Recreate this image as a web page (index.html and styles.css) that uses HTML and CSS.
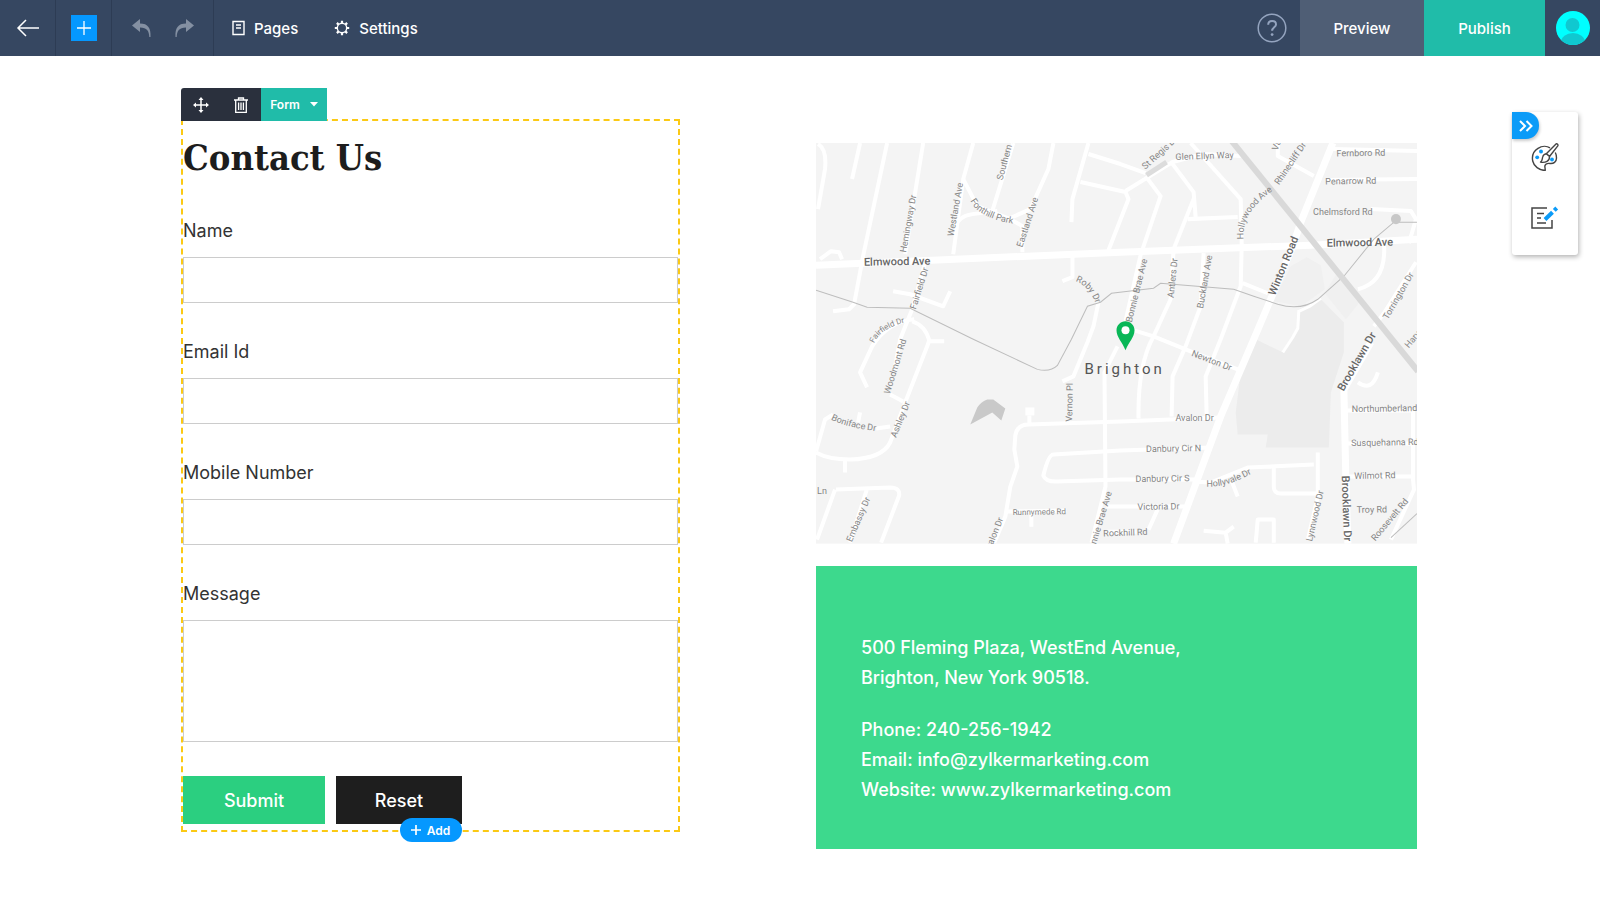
FILE: index.html
```html
<!DOCTYPE html>
<html lang="en">
<head>
    <meta charset="UTF-8">
    <meta name="viewport" content="width=device-width, initial-scale=1.0">
    <title>Site Builder - Contact Us</title>
    <link rel="stylesheet" href="styles.css">
</head>
<body>
    <header class="topbar">
        <button class="bar-cell back-btn" aria-label="Back">
            <svg width="24" height="20" viewBox="0 0 24 20" fill="none" stroke="currentColor" stroke-width="1.5"><path d="M10 2 2 10l8 8M2 10h21"/></svg>
        </button>
        <button class="bar-cell add-btn" aria-label="Add element">
            <span class="add-box">
                <svg width="26" height="26" viewBox="0 0 26 26" stroke="currentColor" stroke-width="1.3"><path d="M13 6v14M6 13h14"/></svg>
            </span>
        </button>
        <div class="bar-cell history">
            <button aria-label="Undo">
                <svg width="20" height="20" viewBox="0 0 20 20" fill="currentColor"><path d="M8 1v4.500c8 0 11 4.500 10.500 13.500h-1.200C17 13 15 9.600 8 9.600V14L0 7.500z"/></svg>
            </button>
            <button aria-label="Redo">
                <svg width="20" height="20" viewBox="0 0 20 20" fill="currentColor"><path d="M12 1v4.500C4 5.500 1 10 1.500 19h1.200C3 13 5 9.600 12 9.600V14l8-6.500z"/></svg>
            </button>
        </div>
        <nav class="bar-menu">
            <a href="#pages">
                <svg width="13" height="16" viewBox="0 0 13 16" fill="none" stroke="currentColor" stroke-width="1.4"><path d="M1 1.500h11v13H1z"/><path d="M4 5h5M4 8h5"/></svg>
                Pages
            </a>
            <a href="#settings">
                <svg width="16" height="16" viewBox="0 0 16 16" fill="none" stroke="currentColor" stroke-width="1.4"><circle cx="8" cy="8" r="4.7"/><path stroke-width="2.2" d="M8 .8v2.400M8 12.800v2.400M.8 8h2.400M12.800 8h2.400M2.900 2.900l1.700 1.700M11.400 11.400l1.700 1.700M2.900 13.100l1.700-1.700M11.400 4.600l1.700-1.700"/></svg>
                Settings
            </a>
        </nav>
        <div class="bar-right">
            <button class="help-btn" aria-label="Help">
                <svg width="30" height="30" viewBox="0 0 30 30" fill="none" stroke="currentColor" stroke-width="1.5"><circle cx="15" cy="15" r="13.8"/><path stroke-width="2" d="M11.200 11.800c0-2.400 1.600-3.800 3.900-3.800s3.900 1.400 3.900 3.400c0 2.900-3.900 2.900-3.900 6.400"/><circle cx="15.1" cy="21.6" r="1.4" fill="currentColor" stroke="none"/></svg>
            </button>
            <button class="preview-btn">Preview</button>
            <button class="publish-btn">Publish</button>
            <button class="avatar-btn" aria-label="Account">
                <svg width="34" height="34" viewBox="0 0 34 34"><defs><clipPath id="avatarClip"><circle cx="17" cy="17" r="17"/></clipPath></defs><g clip-path="url(#avatarClip)"><path fill="#00ffff" d="M0 0h34v34H0z"/><circle cx="16.5" cy="14" r="7" fill="#10c8d0"/><ellipse cx="17" cy="31" rx="12" ry="9" fill="#10c8d0"/></g></svg>
            </button>
        </div>
    </header>

    <main class="canvas">
        <form class="contact-form" onsubmit="return false">
            <div class="element-tools">
                <button type="button" class="tool" aria-label="Move">
                    <svg width="16" height="16" viewBox="0 0 16 16" stroke="currentColor" stroke-width="1.5" fill="currentColor"><path d="M8 2v12M2 8h12"/><path stroke="none" d="M8 0l2.500 3h-5zM8 16l2.500-3h-5zM0 8l3-2.500v5zM16 8l-3-2.500v5z"/></svg>
                </button>
                <button type="button" class="tool" aria-label="Delete">
                    <svg width="14" height="16" viewBox="0 0 14 16" fill="none" stroke="currentColor" stroke-width="1.3"><path d="M0 3h14M4.500 3V1h5v2M1.700 3v12.300h10.600V3M4.600 5.500v7.500M7 5.500v7.500M9.400 5.500v7.500"/></svg>
                </button>
                <button type="button" class="type-btn">Form
                    <svg width="8" height="5" viewBox="0 0 8 5" fill="currentColor"><path d="M0 0h8L4 4.500z"/></svg>
                </button>
            </div>
            <h1>Contact Us</h1>
            <div class="field">
                <label for="name">Name</label>
                <input type="text" id="name">
            </div>
            <div class="field">
                <label for="email">Email Id</label>
                <input type="email" id="email">
            </div>
            <div class="field">
                <label for="mobile">Mobile Number</label>
                <input type="tel" id="mobile">
            </div>
            <div class="field">
                <label for="message">Message</label>
                <textarea id="message"></textarea>
            </div>
            <div class="form-buttons">
                <button type="submit" class="submit-btn">Submit</button>
                <button type="reset" class="reset-btn">Reset</button>
            </div>
            <button type="button" class="add-pill">
                <svg width="10" height="10" viewBox="0 0 10 10" stroke="currentColor" stroke-width="1.7"><path d="M5 0v10M0 5h10"/></svg>
                Add
            </button>
        </form>

        <section class="info">
            <svg class="map" viewBox="0 0 600 400" role="img" aria-label="Map of Brighton">
                <defs>
                    <path id="fonthill" d="M154 58Q164 76 200 81"/>
                    <path id="hollywood" d="M427 96Q424 68 460 45"/>
                    <path id="roby" d="M259 138Q273 143 280 162"/>
                    <path id="fairfield" d="M58 200Q64 185 90 179"/>
                    <path id="boniface" d="M15 276Q30 284 62 288"/>
                    <path id="hollyvale" d="M390 343Q412 344 438 328"/>
                </defs>
                <rect width="600" height="400" fill="#f4f4f4"/>
                <path class="park" d="M482 166 504 156 527 179V209L514 249 512 304H449L451 291H421L419 269 424 229 439 196 466 209 482 186Z"/>
                <path class="park light" d="M474 123 490 114 504 122 508 146 484 163 457 158Z"/>
                <path class="park light" d="M508 150 520 130 545 156 529 176Z"/>

                <g class="roads">
                    <path d="M2 1Q11 6 9 26L2 66M44 0 36 36M71 0 47 113 38 161 33 166 17 168M107 0 89 111M157 0 147 36 137 111"/>
                    <path d="M147 36 161 63 194 76 206 83V109M137 86Q142 73 156 71L181 68M197 0 176 68M237 0 232 26 214 66 194 75"/>
                    <path d="M272 0 256 56 255 79M272 11 304 21 329 30M264 39 309 49 312 56 292 107M4 116 15 108 23 109 26 116M256 113V134L246 138"/>
                    <path d="M77 148 94 151 127 163 134 148M109 119 96 166 84 196 78 228M96 178Q109 182 113 197L111 203 89 259 74 299Q66 315 34 316 12 316 0 309"/>
                    <path d="M98 176Q72 178 56 203L44 229 51 244M74 251 87 258M0 308 9 276 17 271M60 285 74 283M29 316V329M44 269 42 279M113 198H128"/>
                    <path d="M20 346 74 344Q84 344 83 352L65 399M19 346 1 396M51 345 34 399"/>
                    <path d="M309 48 356 19 387 11 424 13M329 33 344 53 324 112 309 178M356 21 377 49 379 74M377 56 357 106 354 156 337 193Q321 222 322 275"/>
                    <path d="M371 76 421 74M374 0 424 56 425 102 424 143 404 196 389 233 390 272M387 110 384 163 369 203 356 233 355 273M426 140 451 150"/>
                    <path d="M461 0V13L497 33M516 6 601 8M510 37 601 36M554 66 594 68 599 76 592 100M567 100Q570 139 541 146M599 119 567 170 557 183"/>
                    <path d="M311 185 337 193 374 208 421 226M301 203 288 229 289 343 275 399M282 159 277 183 271 199 257 233 246 238"/>
                    <path d="M404 274 304 278 212 281Q201 281 199 292L198 306 201 323 194 343 189 373 178 399M213 272V280M395 304 304 307 237 311Q232 311 227 332 229 338 240 338L304 336H380M290 363H370M290 388H320M341 366 332 386"/>
                    <path d="M189 368 250 367M215 369V383M376 338 394 339 431 324 497 321M501 309V353L491 396M457 324V343Q457 350 464 350L501 350M414 335 421 353"/>
                    <path d="M387 387 409 389 417 383M409 389 411 400M439 399 441 376H457V399M541 239Q555 249 561 229M527 267H596V336L597 346 574 396M529 300H596M529 333H596"/>
                </g>
                <path d="M504 155 493 163 482 168 481 185 476 194 466 209" fill="none" stroke="#fff" stroke-width="3"/>
                <rect x="209" y="264" width="9" height="8" fill="#fff"/>
                <g class="roads major">
                    <path d="M0 122 304 109 494 102 601 96"/>
                    <path d="M516 0 484 79 476 103 451 163 437 196 404 273 357 400"/>
                    <path d="M554 199 527 246 529 336 531 400"/>
                </g>
                <path class="rail" d="M0 147 37 159 51 164 94 165 157 196 221 226Q234 229 241 222L255 196 271 163 284 159 295 150 337 145 344 140 417 146 437 153 461 161Q484 168 501 156L527 133 557 96 577 79H600"/>
                <path class="rail" d="M600 370 574 394"/>
                <path class="highway" d="M415-2 601 228"/>
                <path d="M330 32 350 19" stroke="#dcdcdc" stroke-width="5"/>
                <circle cx="579" cy="76" r="5" fill="#c8c8c8"/>
                <path fill="#c9c9c9" d="M154 281 161 264Q165 258 171 256H177L189 265 185 277 176 269Z"/>

                <g class="streets">
                    <text transform="translate(95 81) rotate(-80)">Hemingway Dr</text>
                    <text transform="translate(142 67) rotate(-80)">Westland Ave</text>
                    <text transform="translate(192 16) rotate(-75)">Southern A</text>
                    <text transform="translate(214 80) rotate(-72)">Eastland Ave</text>
                    <text transform="translate(106 146) rotate(-73)">Fairfield Dr</text>
                    <text transform="translate(82 224) rotate(-73)">Woodmont Rd</text>
                    <text transform="translate(87 277) rotate(-68)">Ashley Dr</text>
                    <text transform="translate(45 377) rotate(-67)">Embassy Dr</text>
                    <text x="6" y="350">Ln</text>
                    <text transform="translate(180 393) rotate(-68)">Avalon Dr</text>
                    <text transform="translate(223 371) rotate(-1)" class="tiny">Runnymede Rd</text>
                    <text transform="translate(256 259) rotate(-89)">Vernon Pl</text>
                    <text transform="translate(286 380) rotate(-73)">Bonnie Brae Ave</text>
                    <text transform="translate(309 392) rotate(-2)">Rockhill Rd</text>
                    <text transform="translate(342 366) rotate(-1)">Victoria Dr</text>
                    <text transform="translate(346 338) rotate(-1)">Danbury Cir S</text>
                    <text transform="translate(357 308) rotate(-1)">Danbury Cir N</text>
                    <text x="378" y="278">Avalon Dr</text>
                    <text transform="translate(394 220) rotate(21)">Newton Dr</text>
                    <text transform="translate(323 148) rotate(-76)">Bonnie Brae Ave</text>
                    <text transform="translate(359 135) rotate(-84)">Antlers Dr</text>
                    <text transform="translate(391 139) rotate(-80)">Buckland Ave</text>
                    <text transform="translate(345 12) rotate(-42)">St Regis Dr</text>
                    <text transform="translate(388 16) rotate(-2)">Glen Ellyn Way</text>
                    <text transform="translate(476 22) rotate(-56)">Rhinecliff Dr</text>
                    <text transform="translate(463 2) rotate(-70)">Val</text>
                    <text transform="translate(544 13) rotate(-1)">Fernboro Rd</text>
                    <text transform="translate(534 41) rotate(-1)">Penarrow Rd</text>
                    <text x="526" y="72">Chelmsford Rd</text>
                    <text transform="translate(584 154) rotate(-60)">Torrington Dr</text>
                    <text transform="translate(602 193) rotate(-50)">Harvard</text>
                    <text transform="translate(574 268) rotate(-1)">Northumberland Rd</text>
                    <text transform="translate(568 302) rotate(-1)">Susquehanna Rd</text>
                    <text transform="translate(558 335) rotate(-1)">Wilmot Rd</text>
                    <text transform="translate(555 369) rotate(-1)">Troy Rd</text>
                    <text transform="translate(575 378) rotate(-50)">Roosevelt Rd</text>
                    <text transform="translate(501 373) rotate(-77)">Lynnwood Dr</text>
                </g>
                <g class="streets curved">
                    <text><textPath href="#fonthill">Fonthill Park</textPath></text>
                    <text><textPath href="#hollywood">Hollywood Ave</textPath></text>
                    <text><textPath href="#roby">Roby Dr</textPath></text>
                    <text class="tiny"><textPath href="#fairfield">Fairfield Dr</textPath></text>
                    <text><textPath href="#boniface">Boniface Dr</textPath></text>
                    <text><textPath href="#hollyvale">Hollyvale Dr</textPath></text>
                </g>
                <g class="avenues">
                    <text transform="translate(81 122) rotate(-1)">Elmwood Ave</text>
                    <text transform="translate(543 103) rotate(-1)">Elmwood Ave</text>
                    <text transform="translate(470 124) rotate(-68)">Winton Road</text>
                    <text transform="translate(543 220) rotate(-60)">Brooklawn Dr</text>
                    <text transform="translate(526 365) rotate(88)">Brooklawn Dr</text>
                </g>
                <path fill="#09b757" d="M309 178c5 0 9 4 9 9 0 7-6 12-9 20-3-8-9-13-9-20 0-5 4-9 9-9z"/>
                <circle cx="309" cy="187" r="4" fill="#fff"/>
                <text class="town" x="268" y="231">Brighton</text>
            </svg>
            <address class="address">
                <p>500 Fleming Plaza, WestEnd Avenue,<br>Brighton, New York 90518.</p>
                <p>Phone: 240-256-1942<br>
                Email: <a href="mailto:info@zylkermarketing.com">info@zylkermarketing.com</a><br>
                Website: <a href="#website">www.zylkermarketing.com</a></p>
            </address>
        </section>
    </main>

    <aside class="side-panel">
        <button class="collapse-btn" aria-label="Collapse panel">
            <svg width="14" height="12" viewBox="0 0 14 12" fill="none" stroke="currentColor" stroke-width="2"><path d="M1 1l5 5-5 5M7.500 1l5 5-5 5"/></svg>
        </button>
        <button class="panel-btn" aria-label="Theme">
            <svg width="28" height="28" viewBox="0 0 28 28" fill="none" stroke="#444" stroke-width="1.4" stroke-linejoin="round"><path d="M19 4.800C16 2.900 11 2.800 7 5.300 2.500 8 .8 13 1.700 18c1.200 5.300 6.300 9.300 12.500 9.500.2-2.200-.7-3.400-.2-5 .6-1.800 2.600-2.300 5-2 3.500.4 6.500-1.500 6.500-5.500 0-2.100-.4-4-1.200-5.500"/><path d="M25 .9c1.200-.4 2.400.8 1.800 2L18.500 13.500 15.300 10.700z"/><path d="M15.300 10.700l3.200 2.800c.3 4.500-4 6.500-9 5.600 2-1 1.500-2.800 2.200-5.200.5-1.900 2-3 3.600-3.200z" fill="#fff"/><g fill="#0b9bf8" stroke="none"><circle cx="10" cy="8.5" r="2"/><circle cx="6.2" cy="14.3" r="1.9"/><circle cx="21" cy="16.5" r="1.9"/></g></svg>
        </button>
        <button class="panel-btn" aria-label="Edit content">
            <svg width="28" height="24" viewBox="0 0 28 24" fill="none" stroke="#444" stroke-width="1.5"><path d="M16 2H1v20h20v-8M6 7.500h7M6 12h4M6 17h9"/><path stroke="#0b9bf8" stroke-width="4" d="M14 13.500 21.500 6.200"/><path stroke="#0b9bf8" stroke-width="4" d="M23.300 4.400l2.400-2.400"/></svg>
        </button>
    </aside>
</body>
</html>
```
FILE: styles.css
```css
* {
    box-sizing: border-box;
}
body {
    margin: 0;
    position: relative;
    font-family: Inter, "Liberation Sans", sans-serif;
    color: #333;
    background: #fff;
}
button {
    padding: 0;
    border: none;
    background: none;
    color: inherit;
    font: inherit;
    cursor: pointer;
}
svg {
    display: block;
    flex-shrink: 0;
}

/* Top bar */
.topbar {
    display: flex;
    height: 56px;
    background: #364761;
    color: #fff;
    font-size: 15px;
    font-weight: 500;
}
.bar-cell {
    display: flex;
    align-items: center;
    justify-content: center;
    border-right: 1px solid #2d3c54;
}
.back-btn,
.add-btn {
    width: 56px;
}
.add-box {
    background: #0598ff;
}
.history {
    width: 102px;
    gap: 22px;
    color: #8490a2;
}
.bar-menu {
    display: flex;
    align-items: center;
    gap: 36px;
    padding-left: 18px;
}
.bar-menu a {
    display: flex;
    align-items: center;
    gap: 9px;
    color: inherit;
    text-decoration: none;
}
.bar-right {
    display: flex;
    margin-left: auto;
}
.help-btn {
    width: 56px;
    display: flex;
    align-items: center;
    justify-content: center;
    color: #94a4bf;
}
.preview-btn {
    width: 124px;
    background: #4f5e75;
}
.publish-btn {
    width: 121px;
    background: #20bca9;
}
.avatar-btn {
    width: 55px;
    display: flex;
    align-items: center;
    justify-content: center;
}

/* Page canvas */
.canvas {
    display: grid;
    grid-template-columns: 499fr 601fr;
    gap: 136px;
    align-items: start;
    padding: 63px 183px 63px 181px;
}
.contact-form {
    position: relative;
    padding-bottom: 6px;
    border: 2px dashed #fbc914;
}
.element-tools {
    position: absolute;
    left: -2px;
    top: -33px;
    display: flex;
    height: 33px;
    background: #2a303d;
    color: #fff;
    border-top-left-radius: 3px;
}
.tool {
    width: 40px;
    display: flex;
    align-items: center;
    justify-content: center;
}
.type-btn {
    width: 66px;
    display: flex;
    align-items: center;
    justify-content: center;
    gap: 10px;
    background: #20bca9;
    font-size: 12px;
    font-weight: 600;
}
.contact-form h1 {
    margin: 0 0 38px;
    padding-top: 12px;
    font-family: "DejaVu Serif Condensed", "DejaVu Serif", serif;
    font-size: 36px;
    line-height: 48px;
    color: #1d1d1d;
}
.field {
    display: flex;
    flex-direction: column;
    gap: 14px;
    margin-bottom: 37px;
}
.field label {
    font-size: 18px;
    line-height: 24px;
}
.field input,
.field textarea {
    width: 100%;
    height: 46px;
    padding: 10px;
    border: 1px solid #ccc;
    border-radius: 0;
    background: #fff;
    font: inherit;
    font-size: 18px;
}
.field textarea {
    height: 122px;
    resize: none;
}
.form-buttons {
    display: flex;
    gap: 11px;
    margin-top: -3px;
    color: #fff;
    font-size: 18px;
    font-weight: 500;
}
.form-buttons button {
    height: 48px;
}
.submit-btn {
    width: 142px;
    background: #2bcf80;
}
.form-buttons .reset-btn {
    width: 126px;
    background: #1e1e1e;
}
.add-pill {
    position: absolute;
    left: 50%;
    bottom: -12px;
    transform: translateX(-50%);
    display: flex;
    align-items: center;
    justify-content: center;
    gap: 6px;
    width: 62px;
    height: 24px;
    border-radius: 12px;
    background: #0598ff;
    color: #fff;
    font-size: 12px;
    font-weight: 600;
}

/* Map and address */
.info {
    padding-top: 24px;
}
.map {
    width: 100%;
    margin-bottom: 22px;
    font-family: Roboto, sans-serif;
}
.park {
    fill: #ececec;
}
.park.light {
    fill: #f0f0f0;
}
.roads path {
    fill: none;
    stroke: #fff;
    stroke-width: 4;
    stroke-linejoin: round;
}
.roads.major path {
    stroke-width: 7;
}
.rail {
    fill: none;
    stroke: #bdbdbd;
    stroke-width: 1;
}
.highway {
    stroke: #d9d9d9;
    stroke-width: 6;
}
.streets {
    font-size: 9px;
    fill: #858585;
    text-anchor: middle;
}
.streets .tiny {
    font-size: 8px;
}
.curved {
    text-anchor: start;
}
.avenues {
    font-size: 11px;
    font-weight: 500;
    fill: #666;
    text-anchor: middle;
}
.town {
    font-size: 15px;
    letter-spacing: 3px;
    fill: #555;
}
.address {
    padding: 67px 45px 44px;
    background: #3dd98d;
    color: #fff;
    font-size: 18px;
    font-style: normal;
    font-weight: 500;
    line-height: 30px;
}
.address p {
    margin: 0;
}
.address p + p {
    margin-top: 22px;
}
.address a {
    color: inherit;
    text-decoration: none;
}

/* Floating side panel */
.side-panel {
    position: absolute;
    top: 112px;
    right: 22px;
    width: 66px;
    height: 143px;
    display: flex;
    flex-direction: column;
    align-items: center;
    gap: 35px;
    padding-top: 31px;
    border-radius: 3px;
    background: #fff;
    box-shadow: 1px 2px 5px rgba(0, 0, 0, 0.3);
}
.collapse-btn {
    position: absolute;
    left: 0;
    top: 0;
    width: 27px;
    height: 27px;
    display: flex;
    align-items: center;
    justify-content: center;
    border-radius: 0 13px 13px 0;
    background: #0b9bf8;
    color: #fff;
    box-shadow: 1px 2px 3px rgba(0, 0, 0, 0.2);
}
```
